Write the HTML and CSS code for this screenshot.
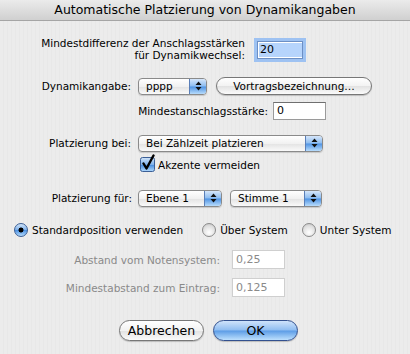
FILE: index.html
```html
<!DOCTYPE html>
<html lang="de">
<head>
    <meta charset="UTF-8">
    <meta name="viewport" content="width=device-width, initial-scale=1.0">
    <title>Automatische Platzierung von Dynamikangaben</title>
    <link rel="stylesheet" href="styles.css">
</head>
<body>
    <div class="dialog">
        <div class="titlebar">Automatische Platzierung von Dynamikangaben</div>

        <div class="row row-diff">
            <label class="label label-diff">Mindestdifferenz der Anschlagsstärken<br>für Dynamikwechsel:</label>
            <div class="field field-focus"><span class="selected">20</span></div>
        </div>

        <div class="row row-dyn">
            <label class="label label-main">Dynamikangabe:</label>
            <div class="popup popup-ppp">
                <span class="popup-text">pppp</span>
                <span class="popup-cap"><svg width="7" height="10" viewBox="0 0 7 10"><path d="M3.5 0.5 L6.5 4 L0.5 4 Z M3.5 9.5 L6.5 6 L0.5 6 Z" fill="#111"/></svg></span>
            </div>
            <button class="push push-vortrag">Vortragsbezeichnung…</button>
        </div>

        <div class="row row-min">
            <label class="label label-min">Mindestanschlagsstärke:</label>
            <div class="field field-min">0</div>
        </div>

        <div class="row row-bei">
            <label class="label label-main">Platzierung bei:</label>
            <div class="popup popup-bei">
                <span class="popup-text">Bei Zählzeit platzieren</span>
                <span class="popup-cap"><svg width="7" height="10" viewBox="0 0 7 10"><path d="M3.5 0.5 L6.5 4 L0.5 4 Z M3.5 9.5 L6.5 6 L0.5 6 Z" fill="#111"/></svg></span>
            </div>
        </div>

        <div class="row row-check">
            <span class="checkbox">
                <svg width="18" height="18" viewBox="0 0 18 18">
                    <defs>
                        <linearGradient id="cb" x1="0" y1="0" x2="0" y2="1">
                            <stop offset="0" stop-color="#d2e4f8"/>
                            <stop offset="0.5" stop-color="#7fb2ec"/>
                            <stop offset="0.55" stop-color="#4a8fe0"/>
                            <stop offset="1" stop-color="#b3dafc"/>
                        </linearGradient>
                    </defs>
                    <rect x="0.5" y="3.5" width="14" height="14" rx="2" fill="url(#cb)" stroke="#3b5f96"/>
                    <path d="M3.5 9.5 L6.5 14.5 L13.5 1.5" fill="none" stroke="#000" stroke-width="2.4" stroke-linecap="round" stroke-linejoin="round"/>
                </svg>
            </span>
            <span class="check-label">Akzente vermeiden</span>
        </div>

        <div class="row row-fuer">
            <label class="label label-fuer">Platzierung für:</label>
            <div class="popup popup-ebene">
                <span class="popup-text">Ebene 1</span>
                <span class="popup-cap"><svg width="7" height="10" viewBox="0 0 7 10"><path d="M3.5 0.5 L6.5 4 L0.5 4 Z M3.5 9.5 L6.5 6 L0.5 6 Z" fill="#111"/></svg></span>
            </div>
            <div class="popup popup-stimme">
                <span class="popup-text">Stimme 1</span>
                <span class="popup-cap"><svg width="7" height="10" viewBox="0 0 7 10"><path d="M3.5 0.5 L6.5 4 L0.5 4 Z M3.5 9.5 L6.5 6 L0.5 6 Z" fill="#111"/></svg></span>
            </div>
        </div>

        <div class="row row-radio">
            <span class="radio radio-on"></span>
            <span class="radio-label label-std">Standardposition verwenden</span>
            <span class="radio"></span>
            <span class="radio-label label-ueber">Über System</span>
            <span class="radio"></span>
            <span class="radio-label">Unter System</span>
        </div>

        <div class="row row-abst">
            <label class="label label-abst disabled">Abstand vom Notensystem:</label>
            <div class="field field-off">0,25</div>
        </div>

        <div class="row row-eintrag">
            <label class="label label-abst disabled">Mindestabstand zum Eintrag:</label>
            <div class="field field-off">0,125</div>
        </div>

        <div class="row row-buttons">
            <button class="push push-big">Abbrechen</button>
            <button class="push push-big push-default">OK</button>
        </div>
    </div>
</body>
</html>
```

FILE: styles.css
```css
body {
    margin: 0;
    background: #ececec;
    font-family: "DejaVu Sans", "Liberation Sans", sans-serif;
    font-size: 10.5px;
    color: #000;
}
.dialog {
    width: 410px;
    height: 354px;
    overflow: hidden;
    background: repeating-linear-gradient(90deg, #ececec 0, #ececec 3px, #e8e8e8 3px, #e8e8e8 4px);
}
.titlebar {
    height: 20px;
    line-height: 20px;
    text-align: center;
    font-size: 12.5px;
    background: linear-gradient(#ebebeb, #d0d0d0);
    border-bottom: 1px solid #a5a5a5;
}
.row {
    display: flex;
    align-items: center;
}
.label {
    text-align: right;
    flex: none;
}
.disabled {
    color: #8a8a8a;
}

/* rows */
.row-diff { margin-top: 15px; height: 26px; }
.label-diff { width: 245px; line-height: 12px; }
.row-dyn { margin-top: 15px; height: 18px; }
.label-main { width: 131px; }
.row-min { margin-top: 7px; height: 18px; }
.label-min { width: 268px; }
.row-bei { margin-top: 14px; height: 18px; }
.row-check { margin-top: 4px; height: 17px; padding-left: 140px; }
.row-fuer { margin-top: 16px; height: 18px; }
.label-fuer { width: 132px; }
.row-radio { margin-top: 15px; height: 16px; padding-left: 14px; }
.row-abst { margin-top: 12px; height: 19px; }
.row-eintrag { margin-top: 9px; height: 19px; }
.label-abst { width: 220px; }
.row-buttons { margin-top: 22px; height: 22px; padding-left: 119px; gap: 9px; }

/* text fields */
.field {
    box-sizing: border-box;
    height: 18px;
    line-height: 16px;
    padding-left: 3px;
    background: #fff;
    border: 1px solid #9a9a9a;
    border-top-color: #6f6f6f;
    font-size: 11px;
}
.field-focus {
    width: 46px;
    height: 18px;
    margin-left: 12px;
    margin-top: 2px;
    border-color: #6d8fc4;
    box-shadow: 0 0 0 3px #9ec2f2;
    padding-left: 1px;
    padding-top: 0;
}
.selected {
    display: inline-block;
    width: 42px;
    line-height: 14px;
    margin-top: 1px;
    padding-left: 1px;
    background: #b6d4fc;
}
.field-min {
    width: 53px;
    margin-left: 5px;
}
.field-off {
    width: 53px;
    height: 19px;
    margin-left: 12px;
    color: #8a8a8a;
    border-color: #cfcfcf;
    line-height: 17px;
}

/* popup menus */
.popup {
    box-sizing: border-box;
    height: 17px;
    margin-left: 7px;
    display: flex;
    border: 1px solid #8a8a8a;
    border-radius: 4px;
    background: linear-gradient(#ffffff, #f1f1f1 50%, #e3e3e3 52%, #fafafa);
    overflow: hidden;
    box-shadow: 0 1px 1px rgba(0, 0, 0, 0.15);
}
.popup-text {
    flex: 1;
    padding-left: 7px;
    line-height: 15px;
}
.popup-cap {
    width: 16px;
    display: flex;
    align-items: center;
    justify-content: center;
    border-left: 1px solid #5a7fb8;
    background: linear-gradient(#d6e6fa, #8cbcf0 48%, #4f93e3 52%, #b8dcfc);
}
.popup-ppp { width: 69px; }
.popup-bei { width: 185px; }
.popup-ebene { width: 84px; margin-left: 6px; }
.popup-stimme { width: 92px; margin-left: 8px; }

/* push buttons */
.push {
    box-sizing: border-box;
    font-family: inherit;
    color: #000;
    padding: 0;
    border: 1px solid #777;
    border-radius: 10px;
    background: linear-gradient(#ffffff, #f2f2f2 50%, #e2e2e2 52%, #fbfbfb);
    box-shadow: 0 1px 1px rgba(0, 0, 0, 0.2);
}
.push-vortrag {
    width: 156px;
    height: 18px;
    margin-left: 9px;
    font-size: 10.5px;
    line-height: 16px;
}
.push-big {
    width: 85px;
    height: 21px;
    font-size: 12.5px;
    line-height: 19px;
    border-radius: 11px;
}
.push-default {
    border-color: #33518f;
    background: linear-gradient(#cfe3fb, #8fbdf1 48%, #5c9ce6 52%, #bde0fd);
}

/* checkbox and radios */
.checkbox {
    width: 18px;
    height: 18px;
    margin-top: -4px;
}
.check-label {
    margin-left: 0;
}
.radio {
    box-sizing: border-box;
    width: 14px;
    height: 14px;
    border-radius: 50%;
    border: 1px solid #8a8a8a;
    background: radial-gradient(circle at 50% 70%, #ffffff, #e0e0e0 60%, #bdbdbd);
    flex: none;
}
.radio-on {
    border-color: #3b5f96;
    background: radial-gradient(circle, #000 0, #000 2.2px, transparent 2.8px),
                linear-gradient(#d2e4f8, #7fb2ec 48%, #4a8fe0 52%, #b3dafc);
}
.radio-label {
    margin-left: 4px;
}
.label-std { margin-right: 19px; }
.label-ueber { margin-right: 14px; }
```
